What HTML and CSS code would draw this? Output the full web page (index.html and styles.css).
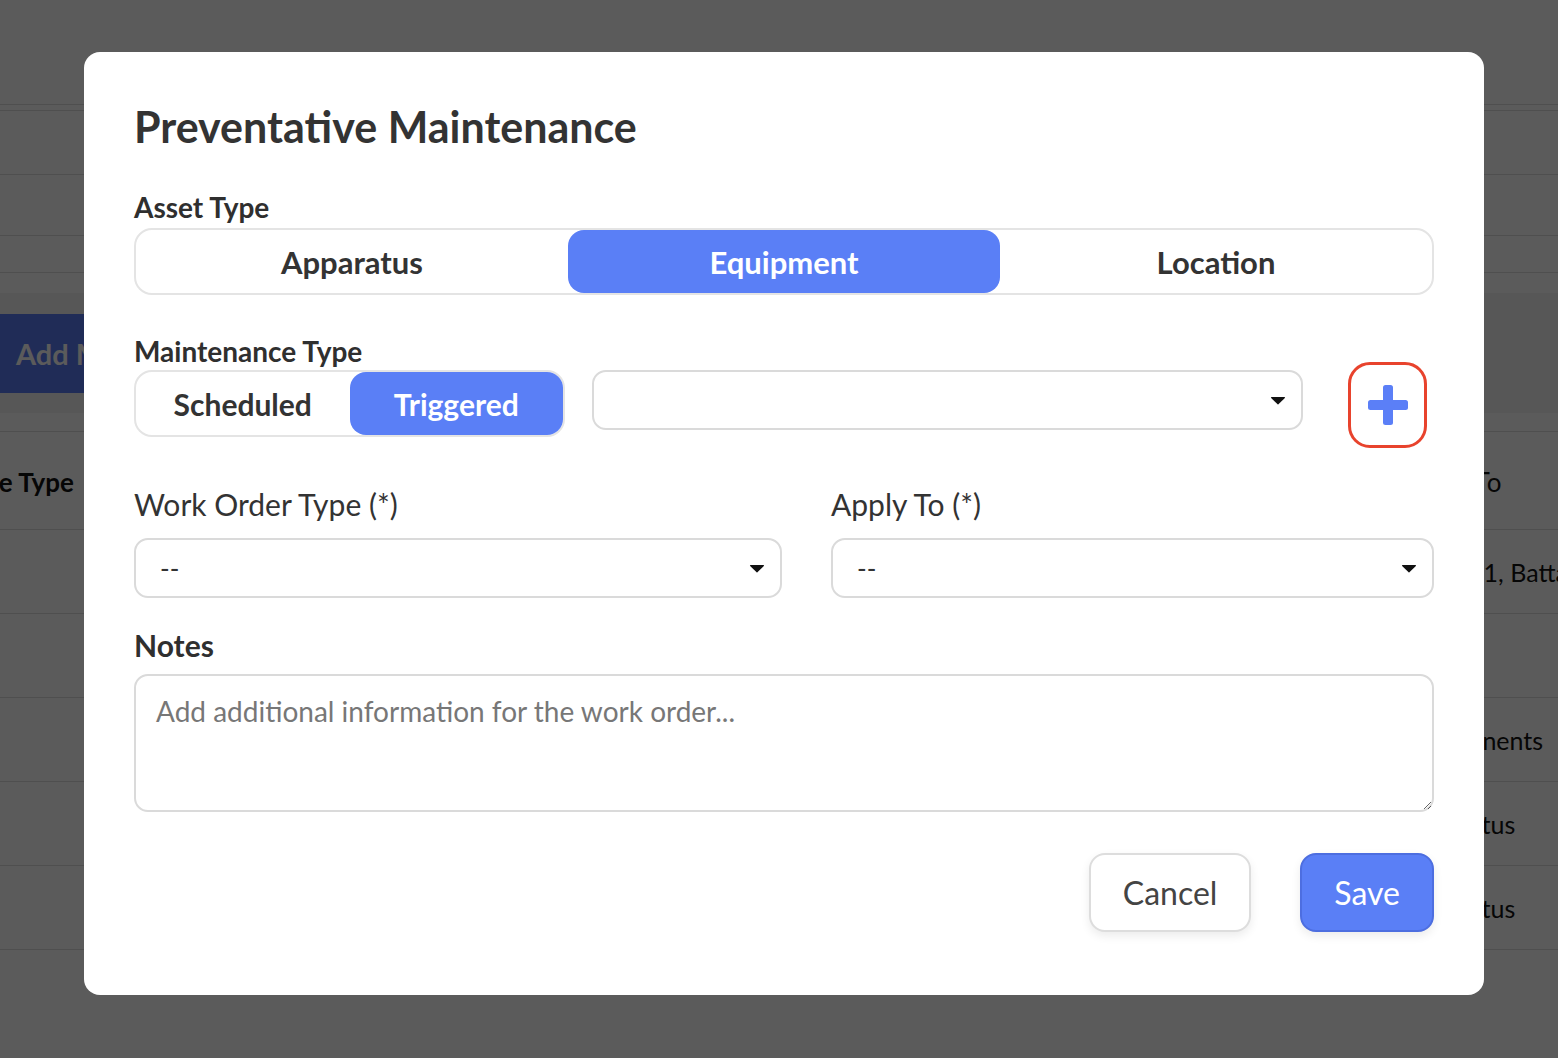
FILE: index.html
```html
<!DOCTYPE html>
<html lang="en">
<head>
    <meta charset="UTF-8">
    <meta name="viewport" content="width=device-width, initial-scale=1.0">
    <title>Preventative Maintenance</title>
    <link rel="stylesheet" href="styles.css">
</head>
<body>
    <!-- Page behind the dialog -->
    <div class="page">
        <div class="page-head"></div>
        <div class="page-rows">
            <div class="page-row tall"></div>
            <div class="page-row mid"></div>
            <div class="page-row short"></div>
        </div>
        <div class="toolbar">
            <button class="btn-add">Add Maintenance</button>
        </div>
        <div class="table">
            <div class="tr th">
                <div class="td">Maintenance Type</div>
                <div class="td"></div>
                <div class="td td-light">Apply To</div>
            </div>
            <div class="tr">
                <div class="td"></div>
                <div class="td"></div>
                <div class="td">Engine 1, Battalion 1</div>
            </div>
            <div class="tr">
                <div class="td"></div>
                <div class="td"></div>
                <div class="td"></div>
            </div>
            <div class="tr">
                <div class="td"></div>
                <div class="td"></div>
                <div class="td">Components</div>
            </div>
            <div class="tr">
                <div class="td"></div>
                <div class="td"></div>
                <div class="td">Apparatus</div>
            </div>
            <div class="tr">
                <div class="td"></div>
                <div class="td"></div>
                <div class="td">Apparatus</div>
            </div>
        </div>
    </div>

    <!-- Dialog -->
    <div class="overlay">
        <div class="modal">
            <h1 class="modal-title">Preventative Maintenance</h1>

            <label class="field-label asset-label">Asset Type</label>
            <div class="segmented asset-type">
                <button class="seg">Apparatus</button>
                <button class="seg active">Equipment</button>
                <button class="seg">Location</button>
            </div>

            <label class="field-label maint-label">Maintenance Type</label>
            <div class="maint-row">
                <div class="segmented maint-type">
                    <button class="seg">Scheduled</button>
                    <button class="seg active">Triggered</button>
                </div>
                <div class="select trigger-select">
                    <span class="select-value"></span>
                    <svg class="caret" width="16" height="9" viewBox="0 0 16 9"><path d="M1.5 1h13a.6.6 0 0 1 .4 1L8.4 8.2a.6.6 0 0 1-.8 0L1.1 2a.6.6 0 0 1 .4-1z" fill="#111"/></svg>
                </div>
                <button class="add-btn" title="Add">
                    <svg width="40" height="40" viewBox="0 0 40 40"><rect x="15" y="0" width="10" height="40" rx="2.5" fill="#5b7ff7"/><rect x="0" y="15" width="40" height="10" rx="2.5" fill="#5b7ff7"/></svg>
                </button>
            </div>

            <div class="field-grid">
                <div>
                    <label class="input-label">Work Order Type (*)</label>
                    <div class="select">
                        <span class="select-value">--</span>
                        <svg class="caret" width="16" height="9" viewBox="0 0 16 9"><path d="M1.5 1h13a.6.6 0 0 1 .4 1L8.4 8.2a.6.6 0 0 1-.8 0L1.1 2a.6.6 0 0 1 .4-1z" fill="#111"/></svg>
                    </div>
                </div>
                <div>
                    <label class="input-label">Apply To (*)</label>
                    <div class="select">
                        <span class="select-value">--</span>
                        <svg class="caret" width="16" height="9" viewBox="0 0 16 9"><path d="M1.5 1h13a.6.6 0 0 1 .4 1L8.4 8.2a.6.6 0 0 1-.8 0L1.1 2a.6.6 0 0 1 .4-1z" fill="#111"/></svg>
                    </div>
                </div>
            </div>

            <label class="field-label notes-label">Notes</label>
            <textarea class="notes" placeholder="Add additional information for the work order..."></textarea>

            <div class="actions">
                <button class="btn btn-cancel">Cancel</button>
                <button class="btn btn-save">Save</button>
            </div>
        </div>
    </div>
</body>
</html>
```

FILE: styles.css
```css
body {
    margin: 0;
    font-family: Lato, "Open Sans", sans-serif;
    background-color: #fff;
    color: #333;
    overflow: hidden;
}

/* Pagina de fundo */
.page {
    height: 1058px;
    overflow: hidden;
}
.page-head {
    height: 104px;
    border-bottom: 1px solid #ddd;
}
.page-rows {
    margin-top: 5px;
}
.page-row {
    border-top: 1px solid #ddd;
}
.page-row.tall {
    height: 63px;
}
.page-row.mid {
    height: 60px;
}
.page-row.short {
    height: 36px;
    border-bottom: 1px solid #ddd;
}
.toolbar {
    margin-top: 20px;
    padding: 21px 0 20px;
    background-color: #f4f4f4;
}
.btn-add {
    display: block;
    height: 79px;
    padding: 0 16px;
    border: none;
    background-color: #5a7bf4;
    color: #fff;
    font-family: inherit;
    font-size: 29px;
    font-weight: 700;
}
.table {
    margin-top: 18px;
    margin-left: -138px;
    border-top: 1px solid #ddd;
}
.tr {
    display: grid;
    grid-template-columns: 240px 1fr 155px;
    height: 83px;
    border-bottom: 1px solid #ddd;
    align-items: center;
    font-size: 25px;
    color: #111;
    white-space: nowrap;
}
.tr.th {
    height: 98px;
    padding-top: 3px;
    box-sizing: border-box;
    font-weight: 700;
    font-size: 26px;
}
.tr.th .td-light {
    font-weight: 400;
}

/* Dialogo */
.overlay {
    position: fixed;
    inset: 0;
    background-color: rgba(0, 0, 0, 0.643);
    display: flex;
    align-items: flex-start;
    padding: 52px 0 0 84px;
}
.modal {
    width: 1400px;
    box-sizing: border-box;
    padding: 51px 50px 63px;
    background-color: #fff;
    border-radius: 16px;
}
.modal-title {
    margin: 0;
    font-size: 43px;
    line-height: 48px;
    font-weight: 700;
    color: #333;
}
.field-label {
    display: block;
    font-size: 28px;
    line-height: 31px;
    font-weight: 700;
    color: #2f2f2f;
}
.asset-label {
    margin: 41px 0 5px;
}
.maint-label {
    margin: 41px 0 3px;
}
.notes-label {
    margin: 29px 0 11px;
    font-size: 30px;
    line-height: 36px;
}

.segmented {
    display: grid;
    box-sizing: border-box;
    height: 67px;
    border: 2px solid #e4e4e4;
    border-radius: 18px;
    background-color: #fff;
}
.asset-type {
    grid-template-columns: repeat(3, 1fr);
}
.seg {
    border: none;
    background: transparent;
    border-radius: 16px;
    font-family: inherit;
    font-size: 31px;
    font-weight: 700;
    color: #333;
    cursor: pointer;
}
.seg.active {
    background-color: #5a7ff6;
    color: #fff;
}

.maint-row {
    display: flex;
    align-items: flex-start;
}
.maint-type {
    width: 431px;
    grid-template-columns: 1fr 1fr;
}
.maint-type .seg {
    font-size: 30px;
}
.trigger-select {
    flex: 1;
    height: 63px;
    margin: 0 45px 0 27px;
    padding-right: 22px;
}
.add-btn {
    box-sizing: border-box;
    width: 79px;
    height: 86px;
    margin: -8px 7px 0 0;
    border: 3px solid #e8432d;
    border-radius: 22px;
    background-color: #fff;
    display: flex;
    align-items: center;
    justify-content: center;
    padding: 0;
    cursor: pointer;
}

.field-grid {
    display: grid;
    grid-template-columns: 648px 1fr;
    gap: 49px;
    margin-top: 38px;
}
.input-label {
    display: block;
    margin-bottom: 16px;
    font-size: 30px;
    line-height: 36px;
    color: #333;
}
.select {
    display: flex;
    align-items: center;
    box-sizing: border-box;
    height: 60px;
    padding: 0 15px 0 24px;
    border: 2px solid #dadada;
    border-radius: 14px;
    background-color: #fff;
}
.select-value {
    flex: 1;
    font-size: 26px;
    color: #333;
}
.caret {
    flex-shrink: 0;
}

.notes {
    display: block;
    width: 100%;
    height: 138px;
    box-sizing: border-box;
    padding: 18px 20px;
    border: 2px solid #dadada;
    border-radius: 14px;
    font-family: inherit;
    font-size: 28px;
    line-height: 34px;
    color: #333;
}
.notes::placeholder {
    color: #777;
}

.actions {
    display: flex;
    justify-content: flex-end;
    gap: 49px;
    margin-top: 41px;
}
.btn {
    height: 79px;
    padding: 0 32px;
    border-radius: 16px;
    font-family: inherit;
    font-size: 32px;
    cursor: pointer;
    box-shadow: 0 4px 10px rgba(0, 0, 0, 0.08);
}
.btn-cancel {
    background-color: #fff;
    border: 2px solid #ddd;
    color: #444;
}
.btn-save {
    background-color: #5a7ff6;
    border: 2px solid #4d6ee0;
    color: #fff;
}
```
